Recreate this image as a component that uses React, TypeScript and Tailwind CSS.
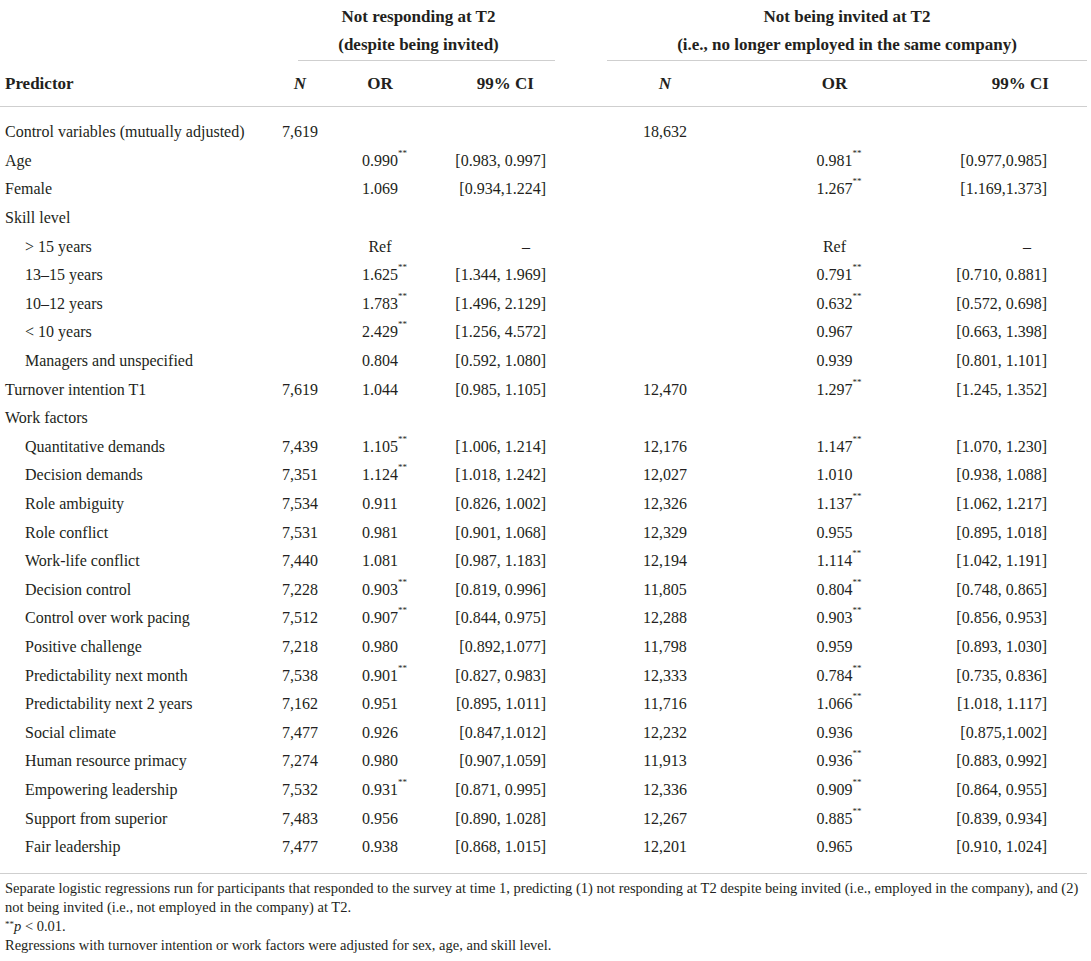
import React from 'react';

type Cell = { n?: string; or?: string; sig?: boolean; ci?: string };

interface TableRow {
  label: string;
  indent?: boolean;
  a?: Cell;
  b?: Cell;
}

const rows: TableRow[] = [
  { label: 'Control variables (mutually adjusted)', a: { n: '7,619' }, b: { n: '18,632' } },
  { label: 'Age', a: { or: '0.990', sig: true, ci: '[0.983, 0.997]' }, b: { or: '0.981', sig: true, ci: '[0.977,0.985]' } },
  { label: 'Female', a: { or: '1.069', ci: '[0.934,1.224]' }, b: { or: '1.267', sig: true, ci: '[1.169,1.373]' } },
  { label: 'Skill level' },
  { label: '> 15 years', indent: true, a: { or: 'Ref', ci: '–' }, b: { or: 'Ref', ci: '–' } },
  { label: '13–15 years', indent: true, a: { or: '1.625', sig: true, ci: '[1.344, 1.969]' }, b: { or: '0.791', sig: true, ci: '[0.710, 0.881]' } },
  { label: '10–12 years', indent: true, a: { or: '1.783', sig: true, ci: '[1.496, 2.129]' }, b: { or: '0.632', sig: true, ci: '[0.572, 0.698]' } },
  { label: '< 10 years', indent: true, a: { or: '2.429', sig: true, ci: '[1.256, 4.572]' }, b: { or: '0.967', ci: '[0.663, 1.398]' } },
  { label: 'Managers and unspecified', indent: true, a: { or: '0.804', ci: '[0.592, 1.080]' }, b: { or: '0.939', ci: '[0.801, 1.101]' } },
  { label: 'Turnover intention T1', a: { n: '7,619', or: '1.044', ci: '[0.985, 1.105]' }, b: { n: '12,470', or: '1.297', sig: true, ci: '[1.245, 1.352]' } },
  { label: 'Work factors' },
  { label: 'Quantitative demands', indent: true, a: { n: '7,439', or: '1.105', sig: true, ci: '[1.006, 1.214]' }, b: { n: '12,176', or: '1.147', sig: true, ci: '[1.070, 1.230]' } },
  { label: 'Decision demands', indent: true, a: { n: '7,351', or: '1.124', sig: true, ci: '[1.018, 1.242]' }, b: { n: '12,027', or: '1.010', ci: '[0.938, 1.088]' } },
  { label: 'Role ambiguity', indent: true, a: { n: '7,534', or: '0.911', ci: '[0.826, 1.002]' }, b: { n: '12,326', or: '1.137', sig: true, ci: '[1.062, 1.217]' } },
  { label: 'Role conflict', indent: true, a: { n: '7,531', or: '0.981', ci: '[0.901, 1.068]' }, b: { n: '12,329', or: '0.955', ci: '[0.895, 1.018]' } },
  { label: 'Work-life conflict', indent: true, a: { n: '7,440', or: '1.081', ci: '[0.987, 1.183]' }, b: { n: '12,194', or: '1.114', sig: true, ci: '[1.042, 1.191]' } },
  { label: 'Decision control', indent: true, a: { n: '7,228', or: '0.903', sig: true, ci: '[0.819, 0.996]' }, b: { n: '11,805', or: '0.804', sig: true, ci: '[0.748, 0.865]' } },
  { label: 'Control over work pacing', indent: true, a: { n: '7,512', or: '0.907', sig: true, ci: '[0.844, 0.975]' }, b: { n: '12,288', or: '0.903', sig: true, ci: '[0.856, 0.953]' } },
  { label: 'Positive challenge', indent: true, a: { n: '7,218', or: '0.980', ci: '[0.892,1.077]' }, b: { n: '11,798', or: '0.959', ci: '[0.893, 1.030]' } },
  { label: 'Predictability next month', indent: true, a: { n: '7,538', or: '0.901', sig: true, ci: '[0.827, 0.983]' }, b: { n: '12,333', or: '0.784', sig: true, ci: '[0.735, 0.836]' } },
  { label: 'Predictability next 2 years', indent: true, a: { n: '7,162', or: '0.951', ci: '[0.895, 1.011]' }, b: { n: '11,716', or: '1.066', sig: true, ci: '[1.018, 1.117]' } },
  { label: 'Social climate', indent: true, a: { n: '7,477', or: '0.926', ci: '[0.847,1.012]' }, b: { n: '12,232', or: '0.936', ci: '[0.875,1.002]' } },
  { label: 'Human resource primacy', indent: true, a: { n: '7,274', or: '0.980', ci: '[0.907,1.059]' }, b: { n: '11,913', or: '0.936', sig: true, ci: '[0.883, 0.992]' } },
  { label: 'Empowering leadership', indent: true, a: { n: '7,532', or: '0.931', sig: true, ci: '[0.871, 0.995]' }, b: { n: '12,336', or: '0.909', sig: true, ci: '[0.864, 0.955]' } },
  { label: 'Support from superior', indent: true, a: { n: '7,483', or: '0.956', ci: '[0.890, 1.028]' }, b: { n: '12,267', or: '0.885', sig: true, ci: '[0.839, 0.934]' } },
  { label: 'Fair leadership', indent: true, a: { n: '7,477', or: '0.938', ci: '[0.868, 1.015]' }, b: { n: '12,201', or: '0.965', ci: '[0.910, 1.024]' } },
];

const grid = 'grid grid-cols-[265px_60px_100px_125px_55px_120px_225px_141px]';

const OddsRatio: React.FC<{ value?: string; sig?: boolean }> = ({ value, sig }) => {
  if (!value) return null;
  return (
    <span className="relative inline-block">
      {value}
      {sig && <sup className="absolute left-full top-[0px] text-[9px] leading-none">**</sup>}
    </span>
  );
};

const CI: React.FC<{ value?: string; first?: boolean }> = ({ value, first }) => {
  if (!value) return <div />;
  if (value === '–') {
    return <div className={`text-right ${first ? 'pr-[20px]' : 'pr-[60px]'}`}>–</div>;
  }
  return <div className={`text-right ${first ? 'pr-[4px]' : 'pr-[44px]'}`}>{value}</div>;
};

export default function App() {
  return (
    <div className="w-[1091px] bg-white text-[#231f20] font-['Liberation_Serif',serif]">
      {/* group headers */}
      <div className={`${grid} pt-[3px] text-[17px] font-bold leading-[28px]`}>
        <div />
        <div className="col-span-3 flex flex-col items-center pl-[28px]">
          <span className="pr-[6px]">Not responding at T2</span>
          <span className="pr-[6px]">(despite being invited)</span>
          <div className="mt-[1px] h-px w-full bg-[#cfcfcf] ml-[10px]" />
        </div>
        <div />
        <div className="col-span-3 flex flex-col items-center pl-[2px] pr-[4px]">
          <span>Not being invited at T2</span>
          <span>(i.e., no longer employed in the same company)</span>
          <div className="mt-[1px] h-px w-full bg-[#cfcfcf]" />
        </div>
      </div>

      {/* column headers */}
      <div className={`${grid} h-[46px] items-center text-[17px] font-bold border-b border-[#cfcfcf] mr-[4px]`}>
        <div className="pl-[5px]">Predictor</div>
        <div className="text-center italic pl-[10px]">N</div>
        <div className="text-center pl-[10px]">OR</div>
        <div className="text-right pr-[16px]">99% CI</div>
        <div />
        <div className="text-center">
          <span className="italic">N</span>
        </div>
        <div className="text-center pr-[6px]">OR</div>
        <div className="text-right pr-[42px]">99% CI</div>
      </div>

      {/* body */}
      <div className="pt-[11px] pb-[12px] text-[16px] border-b border-[#cfcfcf] mr-[4px]">
        {rows.map((r) => (
          <div key={r.label} className={`${grid} h-[28.6px] items-center`}>
            <div className={r.indent ? 'pl-[25px]' : 'pl-[5px]'}>{r.label}</div>
            <div className="text-center pl-[10px]">{r.a?.n}</div>
            <div className="text-center pl-[10px]">
              <OddsRatio value={r.a?.or} sig={r.a?.sig} />
            </div>
            <CI value={r.a?.ci} first />
            <div />
            <div className="text-center">{r.b?.n}</div>
            <div className="text-center pr-[6px]">
              <OddsRatio value={r.b?.or} sig={r.b?.sig} />
            </div>
            <CI value={r.b?.ci} />
          </div>
        ))}
      </div>

      {/* footnotes */}
      <div className="pt-[5px] pl-[5px] pr-[6px] text-[14.5px] leading-[19px]">
        <p>
          Separate logistic regressions run for participants that responded to the survey at time 1, predicting (1) not
          responding at T2 despite being invited (i.e., employed in the company), and (2) not being invited (i.e., not
          employed in the company) at T2.
        </p>
        <p>
          <sup className="text-[9px]">**</sup>
          <span className="italic">p</span> &lt; 0.01.
        </p>
        <p>Regressions with turnover intention or work factors were adjusted for sex, age, and skill level.</p>
      </div>
    </div>
  );
}
